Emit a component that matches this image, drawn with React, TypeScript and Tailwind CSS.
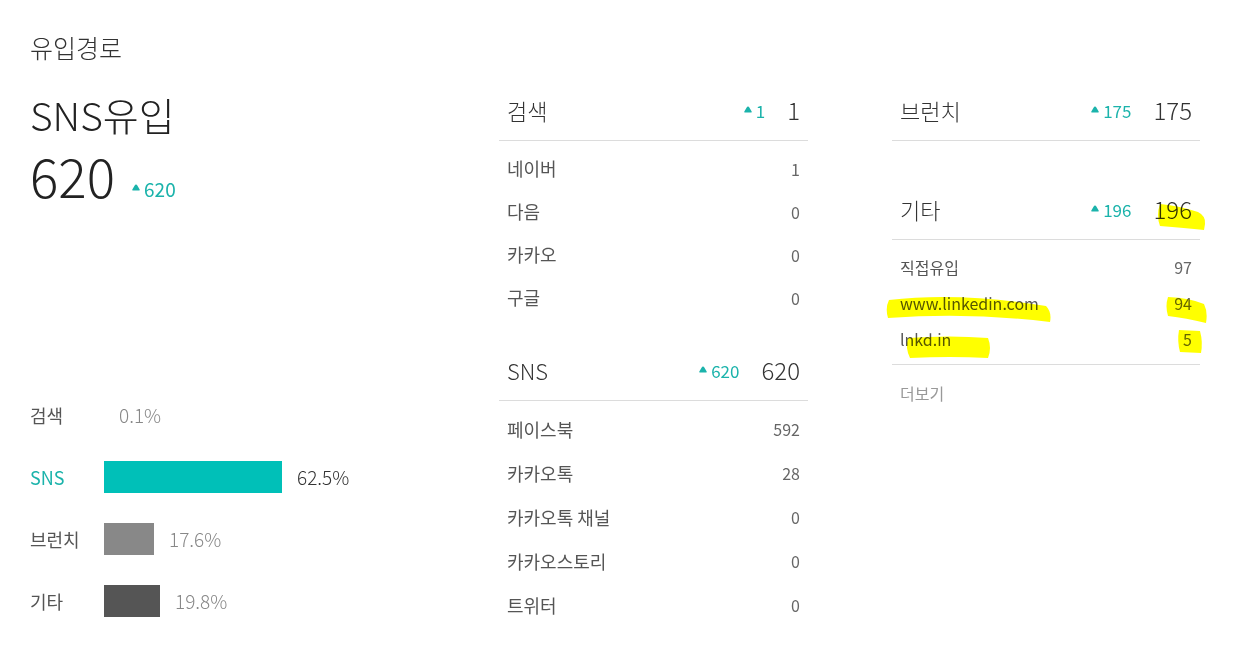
import React from "react";

const FONT = '"Noto Sans CJK KR", "Noto Sans", sans-serif';

function Up({ v, big }: { v: string; big?: boolean }) {
  return (
    <span className={`flex items-center gap-[4px] text-[#1bb3ab] ${big ? "text-[19px]" : "text-[17px]"}`}>
      <svg width="8" height="7" viewBox="0 0 8 7" className="mb-[1px]">
        <path d="M4 0.6C4.6 0.6 4.9 1 5.3 1.6L7.7 5.5Q8 6.4 7.2 6.4L0.8 6.4Q0 6.4 0.3 5.5L2.7 1.6C3.1 1 3.4 0.6 4 0.6Z" fill="#1bb3ab" />
      </svg>
      <span className="leading-none">{v}</span>
    </span>
  );
}

function Header({ title, delta, total }: { title: string; delta: string; total: string }) {
  return (
    <div className="flex h-[61px] items-center border-b border-[#dcdcdc] pl-[8px] pr-[8px]">
      <span className="flex-1 text-[22px] font-light text-[#333]">{title}</span>
      <Up v={delta} />
      <span className="ml-[22px] text-[24px] font-light text-[#333]">{total}</span>
    </div>
  );
}

function Row({ label, value, h = "h-[43px]", size = "text-[18px]" }: { label: string; value: string; h?: string; size?: string }) {
  return (
    <div className={`flex ${h} items-center pl-[8px] pr-[8px]`}>
      <span className={`flex-1 ${size} text-[#555]`}>{label}</span>
      <span className="text-[16px] text-[#666]">{value}</span>
    </div>
  );
}

function Bar({ label, pct, color, labelColor, pctColor }: { label: string; pct: number; color: string; labelColor: string; pctColor: string }) {
  return (
    <div className="flex h-[32px] items-center">
      <span className="w-[74px] text-[18px]" style={{ color: labelColor }}>{label}</span>
      <div className="h-[32px]" style={{ width: `${Math.round((pct / 100) * 285)}px`, backgroundColor: color }} />
      <span className="ml-[15px] text-[19px] font-light" style={{ color: pctColor }}>{pct.toFixed(1)}%</span>
    </div>
  );
}

export default function App() {
  return (
    <div className="relative h-[664px] w-[1245px] overflow-hidden bg-white" style={{ fontFamily: FONT }}>
      <div className="pl-[30px] pt-[30px]">
        <div className="text-[25px] font-light leading-[34px] text-[#333]">유입경로</div>
        <div className="mt-[16px] flex">
          {/* left column */}
          <div className="flex w-[469px] flex-col">
            <div className="mt-[10px] text-[39px] font-light leading-[48px] text-[#222]">SNS유입</div>
            <div className="mt-[7px] flex items-baseline">
              <span className="text-[53px] font-light leading-[60px] text-[#222]">620</span>
              <span className="ml-[17px] -translate-y-[7px]">
                <Up v="620" big />
              </span>
            </div>
            <div className="mt-[194px] flex flex-col gap-[30px]">
              <Bar label="검색" pct={0.1} color="#00c0b8" labelColor="#555" pctColor="#888" />
              <Bar label="SNS" pct={62.5} color="#00c0b8" labelColor="#1bb3ab" pctColor="#333" />
              <Bar label="브런치" pct={17.6} color="#888888" labelColor="#555" pctColor="#888" />
              <Bar label="기타" pct={19.8} color="#555555" labelColor="#555" pctColor="#888" />
            </div>
          </div>

          {/* middle column */}
          <div className="flex w-[309px] flex-col">
            <Header title="검색" delta="1" total="1" />
            <div className="pt-[6px]">
              <Row label="네이버" value="1" />
              <Row label="다음" value="0" />
              <Row label="카카오" value="0" />
              <Row label="구글" value="0" />
            </div>
            <div className="mt-[21px]">
              <Header title="SNS" delta="620" total="620" />
            </div>
            <div className="pt-[6px]">
              <Row label="페이스북" value="592" h="h-[44px]" />
              <Row label="카카오톡" value="28" h="h-[44px]" />
              <Row label="카카오톡 채널" value="0" h="h-[44px]" />
              <Row label="카카오스토리" value="0" h="h-[44px]" />
              <Row label="트위터" value="0" h="h-[44px]" />
            </div>
          </div>

          {/* right column */}
          <div className="ml-[84px] flex w-[308px] flex-col">
            <Header title="브런치" delta="175" total="175" />
            <div className="mt-[38px]">
              <Header title="기타" delta="196" total="196" />
            </div>
            <div className="border-b border-[#dcdcdc] pb-[7px] pt-[9px]">
              <Row label="직접유입" value="97" h="h-[36px]" size="text-[16px]" />
              <Row label="www.linkedin.com" value="94" h="h-[36px]" size="text-[16px]" />
              <Row label="lnkd.in" value="5" h="h-[36px]" size="text-[16px]" />
            </div>
            <div className="pl-[8px] pt-[16px] text-[16px] text-[#999]">더보기</div>
          </div>
        </div>
      </div>

      {/* highlighter marks overlay */}
      <svg className="pointer-events-none absolute left-0 top-0 mix-blend-multiply" width="1245" height="664">
        <g fill="#ffff00">
          <path d="M1160 204 Q1180 206 1198 212 Q1206 216 1205 224 L1204 230 Q1185 228 1160 226 Q1156 215 1160 204Z" />
          <path d="M889 300 Q960 292 1046 306 Q1052 312 1050 322 Q970 312 888 318 Q885 308 889 300Z" />
          <path d="M908 338 Q950 335 988 338 Q992 348 988 358 Q950 356 910 358 Q905 348 908 338Z" />
          <path d="M1168 297 Q1190 298 1204 304 Q1208 312 1206 323 Q1186 318 1168 316 Q1165 306 1168 297Z" />
          <path d="M1179 330 L1200 331 Q1203 342 1201 353 L1180 352 Q1177 341 1179 330Z" />
        </g>
      </svg>
    </div>
  );
}
